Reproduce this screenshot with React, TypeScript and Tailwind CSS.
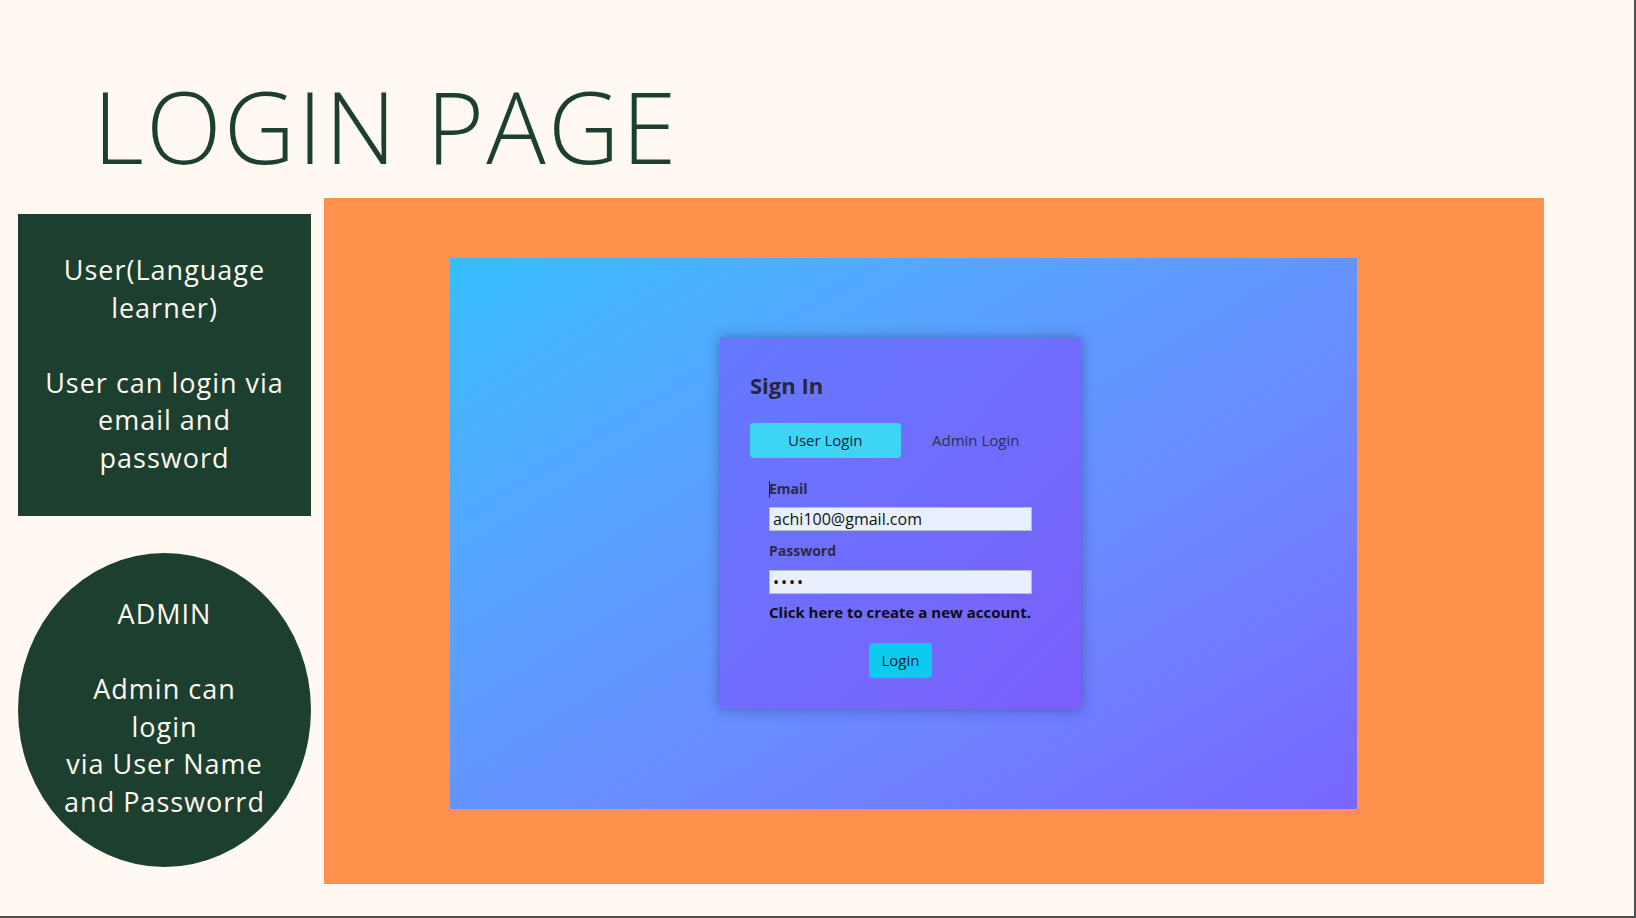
export default function App() {
  return (
    <div className="w-[1636px] h-[918px] box-border overflow-hidden bg-[#fff9f2] border-r-2 border-b-2 border-[#505050]">
      {/* slide title */}
      <div className="h-[198px] pt-[76px] pl-[93px]">
        <h1 className="text-[99px] leading-[99px] tracking-[2.2px] font-light text-[#1d3f2f] whitespace-nowrap [font-family:'Open_Sans',sans-serif]">
          LOGIN PAGE
        </h1>
      </div>

      <div className="flex">
        {/* notes column */}
        <div className="ml-[18px] w-[293px] flex flex-col text-[#fff9f0] text-center text-[27px] leading-[37.5px] tracking-[1px] whitespace-nowrap [font-family:'Open_Sans',sans-serif]">
          <div className="mt-[16px] h-[302px] pb-[3px] bg-[#1d3f2f] flex flex-col items-center justify-center">
            <p>User(Language</p>
            <p>learner)</p>
            <p>&nbsp;</p>
            <p>User can login via</p>
            <p>email and</p>
            <p>password</p>
          </div>
          <div className="mt-[37px] h-[314px] pb-[5px] rounded-[50%] bg-[#1d3f2f] flex flex-col items-center justify-center">
            <p>ADMIN</p>
            <p>&nbsp;</p>
            <p>Admin can</p>
            <p>login</p>
            <p>via User Name</p>
            <p>and Passworrd</p>
          </div>
        </div>

        {/* screenshot panel */}
        <div className="ml-[13px] w-[1220px] h-[686px] bg-[#ff914d] pl-[126px] pt-[60px]">
          <div className="w-[907px] h-[551px] bg-linear-to-br from-[#33bdff] to-[#7866ff] pl-[270px] pt-[80px]">
            <SignInCard />
          </div>
        </div>
      </div>
    </div>
  );
}

function SignInCard() {
  return (
    <div className="w-[361px] pt-[32px] pb-[31px] px-[30px] bg-linear-to-br from-[#6479ff] to-[#7a5ffb] shadow-[0_0_12px_rgba(20,20,60,0.4)] [font-family:'Open_Sans',sans-serif]">
      <h2 className="text-[22px] leading-[30px] font-bold text-[#262838]">Sign In</h2>

      <div className="mt-[23px] grid grid-cols-2">
        <button className="h-[35px] rounded-[4px] bg-[#3dd5f3] text-[15px] text-[#1c2040]">
          User Login
        </button>
        <button className="h-[35px] text-[15px] text-[#2f2f50]">Admin Login</button>
      </div>

      <div className="mt-[21px] pl-[19px] w-[282px] flex flex-col">
        <label className="relative text-[14px] leading-[20px] font-bold text-[#2a2b40]">
          <span className="absolute left-0 top-[2px] w-px h-[17px] bg-[#222]" />
          Email
        </label>
        <input
          readOnly
          value="achi100@gmail.com"
          className="mt-[8px] w-[263px] h-[24px] px-[3px] bg-[#e8f0fe] border border-[#b9bccb] text-[16px] text-[#111] outline-none"
        />
        <label className="mt-[10px] text-[14px] leading-[20px] font-bold text-[#2a2b40]">Password</label>
        <input
          readOnly
          type="password"
          value="1234"
          className="mt-[9px] w-[263px] h-[24px] px-[3px] bg-[#e8f0fe] border border-[#b9bccb] text-[16px] tracking-[2px] text-[#111] outline-none"
        />
        <p className="mt-[8px] text-[15px] leading-[20px] font-bold text-[#0d0d14] whitespace-nowrap">
          Click here to create a new account.
        </p>
        <div className="mt-[21px] w-[263px] flex justify-center">
          <button className="w-[63px] h-[35px] rounded-[4px] bg-[#0dcaf0] text-[15px] text-[#1a1a2e]">
            Login
          </button>
        </div>
      </div>
    </div>
  );
}
